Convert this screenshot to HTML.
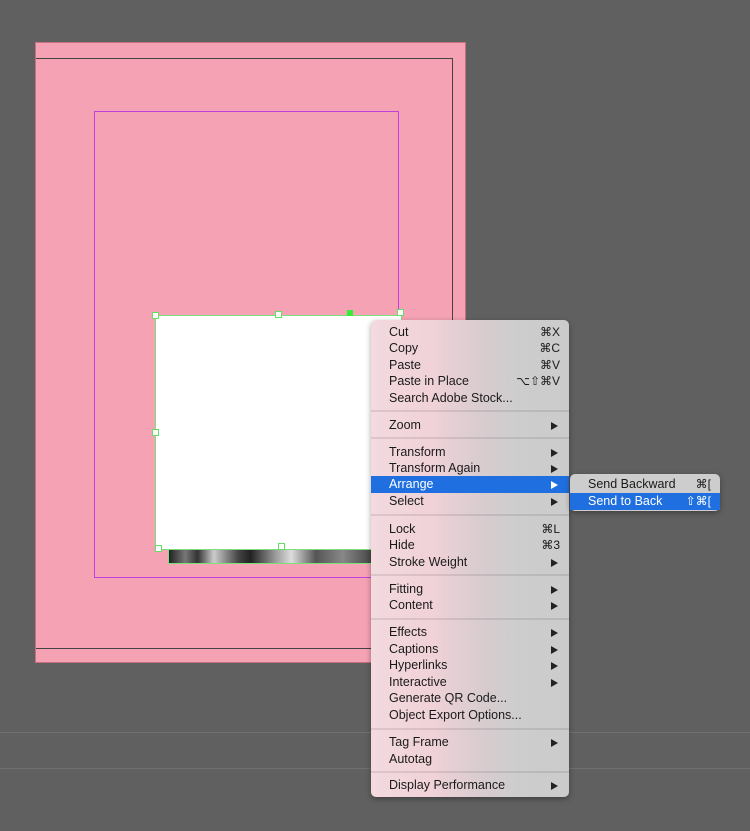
<!DOCTYPE html>
<html><head><style>
body{margin:0;width:750px;height:831px;background:#606060;position:relative;overflow:hidden;font-family:"Liberation Sans",sans-serif;}
.a{position:absolute}
.menu{position:absolute;left:371px;top:320px;width:198px;height:477px;border-radius:5px;background:linear-gradient(90deg,#f2dadf 0px,#f0d2d8 60px,#d8cccf 110px,#cdcdcd 150px,#cbcbcb 198px);box-shadow:0 2px 6px rgba(0,0,0,.35);font-size:12.5px;color:#1a1a1a}
.it{position:absolute;left:0;width:198px;height:17px;line-height:17px}
.it span{position:absolute;left:18px}
.it b{position:absolute;right:9px;font-weight:normal;font-size:12px}
.it i{position:absolute;right:11px;top:5px;width:0;height:0;border-left:7px solid #222;border-top:4px solid transparent;border-bottom:4px solid transparent}
.sep{position:absolute;left:0;width:198px;height:2px;background:rgba(0,0,0,.09)}
.hl{background:#1f6fe0;color:#fff}
.hl i{border-left-color:#fff}
</style></head><body>
<div class="a" style="left:0;top:732px;width:750px;height:1px;background:#707070"></div>
<div class="a" style="left:0;top:768px;width:750px;height:1px;background:#707070"></div>
<div class="a" style="left:36px;top:43px;width:429px;height:619px;background:#f4a2b4;box-shadow:0 0 0 1px #c8707f"></div>
<div class="a" style="left:36px;top:58px;width:416px;height:589px;border-top:1px solid #444;border-right:1px solid #444;border-bottom:1px solid #444"></div>
<div class="a" style="left:94px;top:111px;width:303px;height:465px;border:1px solid #c040e0"></div>
<div class="a" style="left:168px;top:546px;width:204px;height:16px;background:linear-gradient(90deg,#222,#777 8%,#333 14%,#ccc 22%,#444 34%,#222 40%,#999 52%,#ddd 60%,#555 72%,#888 85%,#444);border:1px solid #7ce07c"></div>
<div class="a" style="left:155px;top:315px;width:245px;height:233px;background:#fff;border:1px solid #7ce07c"></div>
<div class="a" style="left:152px;top:312px;width:5px;height:5px;background:#fff;border:1px solid #6d6"></div>
<div class="a" style="left:275px;top:311px;width:5px;height:5px;background:#fff;border:1px solid #6d6"></div>
<div class="a" style="left:347px;top:310px;width:6px;height:6px;background:#3e3"></div>
<div class="a" style="left:397px;top:309px;width:5px;height:5px;background:#fff;border:1px solid #6d6"></div>
<div class="a" style="left:152px;top:429px;width:5px;height:5px;background:#fff;border:1px solid #6d6"></div>
<div class="a" style="left:155px;top:545px;width:5px;height:5px;background:#fff;border:1px solid #6d6"></div>
<div class="a" style="left:278px;top:543px;width:5px;height:5px;background:#fff;border:1px solid #6d6"></div>

<div class="menu">
<div class="it" style="top:4px"><span>Cut</span><b>⌘X</b></div>
<div class="it" style="top:20px"><span>Copy</span><b>⌘C</b></div>
<div class="it" style="top:37px"><span>Paste</span><b>⌘V</b></div>
<div class="it" style="top:53px"><span>Paste in Place</span><b>⌥⇧⌘V</b></div>
<div class="it" style="top:70px"><span>Search Adobe Stock...</span></div>
<div class="sep" style="top:90px"></div>
<div class="it" style="top:97px"><span>Zoom</span><i></i></div>
<div class="sep" style="top:117px"></div>
<div class="it" style="top:124px"><span>Transform</span><i></i></div>
<div class="it" style="top:140px"><span>Transform Again</span><i></i></div>
<div class="it hl" style="top:156px"><span>Arrange</span><i></i></div>
<div class="it" style="top:173px"><span>Select</span><i></i></div>
<div class="sep" style="top:194px"></div>
<div class="it" style="top:201px"><span>Lock</span><b>⌘L</b></div>
<div class="it" style="top:217px"><span>Hide</span><b>⌘3</b></div>
<div class="it" style="top:234px"><span>Stroke Weight</span><i></i></div>
<div class="sep" style="top:254px"></div>
<div class="it" style="top:261px"><span>Fitting</span><i></i></div>
<div class="it" style="top:277px"><span>Content</span><i></i></div>
<div class="sep" style="top:298px"></div>
<div class="it" style="top:304px"><span>Effects</span><i></i></div>
<div class="it" style="top:321px"><span>Captions</span><i></i></div>
<div class="it" style="top:337px"><span>Hyperlinks</span><i></i></div>
<div class="it" style="top:354px"><span>Interactive</span><i></i></div>
<div class="it" style="top:370px"><span>Generate QR Code...</span></div>
<div class="it" style="top:387px"><span>Object Export Options...</span></div>
<div class="sep" style="top:408px"></div>
<div class="it" style="top:414px"><span>Tag Frame</span><i></i></div>
<div class="it" style="top:431px"><span>Autotag</span></div>
<div class="sep" style="top:451px"></div>
<div class="it" style="top:457px"><span>Display Performance</span><i></i></div>
</div>

<div class="menu" style="left:570px;top:474px;width:150px;height:37px;background:#cdcdcd">
<div class="it" style="top:2px;width:150px"><span>Send Backward</span><b>⌘[</b></div>
<div class="it hl" style="top:19px;width:150px"><span>Send to Back</span><b>⇧⌘[</b></div>
</div>
</body></html>
